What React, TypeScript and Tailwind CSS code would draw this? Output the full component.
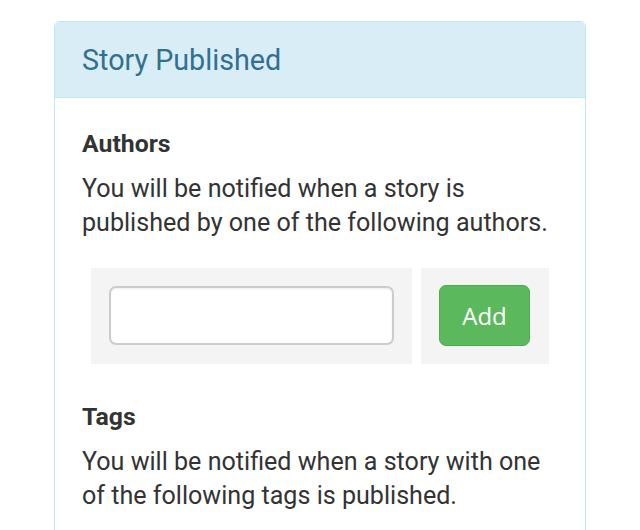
const App = () => {
  return (
    <div className="min-h-screen bg-white font-['Roboto',sans-serif] text-[#333]">
      <div className="pt-[21px] pl-[54px] w-[586px]">
        <div className="border border-[#bce8f1] rounded-[6px] bg-white">
          <div className="bg-[#d9edf7] border-b border-[#bce8f1] rounded-t-[5px] px-[27px] pt-[23px] pb-[21px]">
            <h3 className="text-[28.7px] leading-[31px] text-[#31708f]">Story Published</h3>
          </div>
          <div className="px-[27px] pt-[29px] pb-[27px]">
            <h4 className="text-[24.8px] leading-[34px] font-bold">Authors</h4>
            <p className="mt-[11px] text-[25.1px] leading-[34px]">
              You will be notified when a story is
              <br />
              published by one of the following authors.
            </p>
            <div className="flex gap-[9px] mt-[28px] ml-[9px]">
              <div className="w-[321px] h-[96px] bg-[#f4f4f4] p-[18px]">
                <input
                  type="text"
                  className="w-[285px] h-[59px] bg-white border-2 border-[#ccc] rounded-[7px] outline-none shadow-[inset_0_1px_2px_rgba(0,0,0,0.08)] px-3 text-[24px]"
                />
              </div>
              <div className="w-[128px] h-[96px] bg-[#f4f4f4] pl-[18px] pt-[17px]">
                <button className="w-[91px] h-[61px] bg-[#5cb85c] border border-[#4cae4c] rounded-[7px] text-white text-[24px] font-['Open_Sans',sans-serif]">
                  Add
                </button>
              </div>
            </div>
            <h4 className="mt-[36px] text-[24.8px] leading-[34px] font-bold">Tags</h4>
            <p className="mt-[11px] text-[25.1px] leading-[34px]">
              You will be notified when a story with one
              <br />
              of the following tags is published.
            </p>
          </div>
        </div>
      </div>
    </div>
  );
};

export default App;
